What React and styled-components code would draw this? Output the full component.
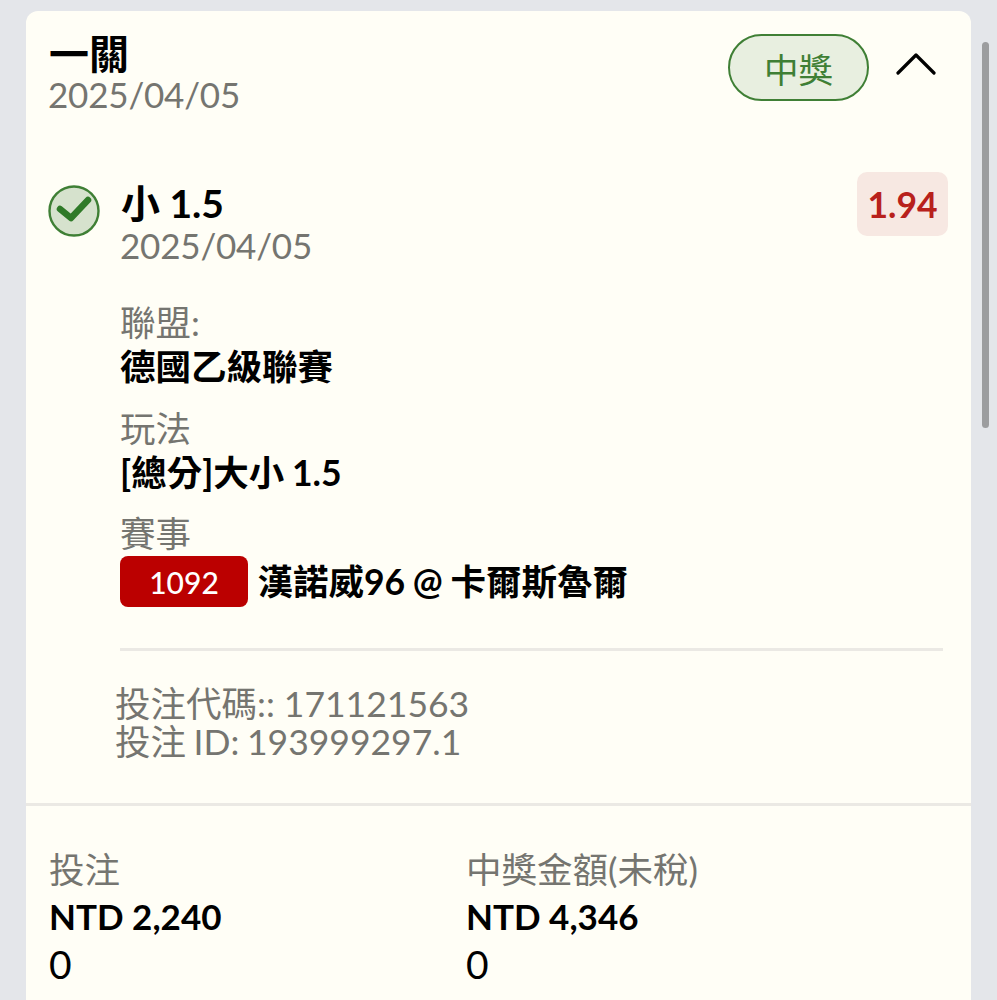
import React from "react";
import styled, { createGlobalStyle } from "styled-components";

const GlobalStyle = createGlobalStyle`
  html, body {
    margin: 0;
    padding: 0;
    height: 1000px;
    overflow: hidden;
    background: #e4e6ea;
  }
  body {
    font-family: Lato, "Noto Sans CJK TC", sans-serif;
  }
`;

const Page = styled.div`
  height: 1000px;
  padding: 11px 26px 0 26px;
  box-sizing: border-box;
  position: relative;
  overflow: hidden;
`;

const Scrollbar = styled.div`
  position: absolute;
  left: 982px;
  top: 42px;
  width: 7px;
  height: 386px;
  border-radius: 4px;
  background: #9c9d9f;
`;

const Card = styled.div`
  background: #fffef6;
  border-radius: 12px 12px 0 0;
  height: 1100px;
`;

const Header = styled.div`
  display: flex;
  justify-content: space-between;
  align-items: flex-start;
  padding: 21px 23px 0 23px;
`;

const Title = styled.div`
  font-size: 40px;
  line-height: 44px;
  font-weight: 700;
  color: #000;
`;

const DateText = styled.div`
  font-size: 35px;
  line-height: 40px;
  letter-spacing: -0.2px;
  margin-left: -1px;
  color: #757570;
`;

const HeaderDate = styled(DateText)`
  margin-top: -2px;
`;

const HeaderRight = styled.div`
  display: flex;
  align-items: center;
  gap: 27px;
  padding: 2px 12px 0 0;
`;

const StatusPill = styled.div`
  width: 141px;
  height: 67px;
  box-sizing: border-box;
  border: 2.5px solid #3f7f35;
  border-radius: 34px;
  background: #e8efe0;
  color: #3f7f35;
  font-size: 34.5px;
  display: flex;
  align-items: center;
  justify-content: center;
`;

const Chevron = styled.svg`
  width: 40px;
  height: 24px;
  margin-bottom: 8px;
  flex: none;
`;

const Selection = styled.div`
  display: flex;
  align-items: flex-start;
  padding: 58px 23px 0 22px;
`;

const CheckIcon = styled.svg`
  width: 52px;
  height: 52px;
  flex: none;
  margin: 13px 21px 0 0;
`;

const SelectionBody = styled.div`
  flex: 1;
  padding-top: 9px;
`;

const SelectionTitle = styled.div`
  font-size: 39px;
  line-height: 44px;
  font-weight: 700;
  color: #000;
`;

const OddsBadge = styled.div`
  width: 91px;
  height: 64px;
  border-radius: 10px;
  background: #f7e8e2;
  color: #b8211c;
  font-size: 35.5px;
  font-weight: 700;
  display: flex;
  align-items: center;
  justify-content: center;
  flex: none;
`;

const Details = styled.div`
  padding: 36px 28px 0 94px;
`;

const Field = styled.div`
  margin-bottom: 17.5px;
`;

const Label = styled.div`
  font-size: 35.5px;
  line-height: 44px;
  color: #757570;
`;

const Value = styled.div`
  font-size: 35.5px;
  line-height: 44px;
  font-weight: 700;
  word-spacing: -1px;
  color: #000;
  display: flex;
  align-items: center;
`;

const MatchCode = styled.span`
  width: 128px;
  height: 51px;
  border-radius: 8px;
  background: #bb0000;
  color: #fff;
  font-size: 30px;
  font-weight: 500;
  display: inline-flex;
  align-items: center;
  justify-content: center;
  margin-right: 9.5px;
`;

const Rule = styled.div`
  height: 3px;
  background: #ebe9e4;
`;

const DetailRule = styled(Rule)`
  margin: 41px 28px 0 94px;
`;

const Codes = styled.div`
  padding: 34px 0 0 89px;
`;

const CodeLine = styled.div`
  font-size: 35.5px;
  line-height: 38px;
  color: #757570;
  word-spacing: ${(p) => (p.$tight ? "-1.5px" : "0")};
`;

const Totals = styled.div`
  display: grid;
  grid-template-columns: 417px 1fr;
  padding: 42px 23px 0 23px;
`;

const TotalValue = styled.div`
  font-size: 35px;
  line-height: 49px;
  font-weight: 700;
  color: #000;
`;

const TotalSub = styled.div`
  font-size: 39px;
  line-height: 46px;
  color: #000;
`;

const FullRule = styled(Rule)`
  margin-top: 42px;
`;

const totals = [
  { label: "投注", value: "NTD 2,240", sub: "0" },
  { label: "中獎金額(未稅)", value: "NTD 4,346", sub: "0" },
];

const App = () => {
  return (
    <Page>
      <GlobalStyle />
      <Card>
        <Header>
          <div>
            <Title>一關</Title>
            <HeaderDate>2025/04/05</HeaderDate>
          </div>
          <HeaderRight>
            <StatusPill>中獎</StatusPill>
            <Chevron viewBox="0 0 40 24" fill="none">
              <path d="M2 21 L20 3 L38 21" stroke="#000" strokeWidth="3.2" strokeLinecap="round" strokeLinejoin="round" />
            </Chevron>
          </HeaderRight>
        </Header>

        <Selection>
          <CheckIcon viewBox="0 0 52 52" fill="none">
            <circle cx="26" cy="26" r="24.5" fill="#d6e2cd" stroke="#3f7f35" strokeWidth="2.4" />
            <path d="M12 24 L23 33 L40 15" stroke="#2f7a28" strokeWidth="6.5" strokeLinecap="round" strokeLinejoin="round" />
          </CheckIcon>
          <SelectionBody>
            <SelectionTitle>小 1.5</SelectionTitle>
            <DateText>2025/04/05</DateText>
          </SelectionBody>
          <OddsBadge>1.94</OddsBadge>
        </Selection>

        <Details>
          <Field>
            <Label>聯盟:</Label>
            <Value>德國乙級聯賽</Value>
          </Field>
          <Field>
            <Label>玩法</Label>
            <Value>[總分]大小 1.5</Value>
          </Field>
          <Field>
            <Label>賽事</Label>
            <Value>
              <MatchCode>1092</MatchCode>
              漢諾威96 @ 卡爾斯魯爾
            </Value>
          </Field>
        </Details>
        <DetailRule />

        <Codes>
          <CodeLine>投注代碼:: 171121563</CodeLine>
          <CodeLine $tight>投注 ID: 193999297.1</CodeLine>
        </Codes>
        <FullRule />

        <Totals>
          {totals.map((t) => (
            <div key={t.label}>
              <Label>{t.label}</Label>
              <TotalValue>{t.value}</TotalValue>
              <TotalSub>{t.sub}</TotalSub>
            </div>
          ))}
        </Totals>
      </Card>
      <Scrollbar />
    </Page>
  );
};

export default App;
